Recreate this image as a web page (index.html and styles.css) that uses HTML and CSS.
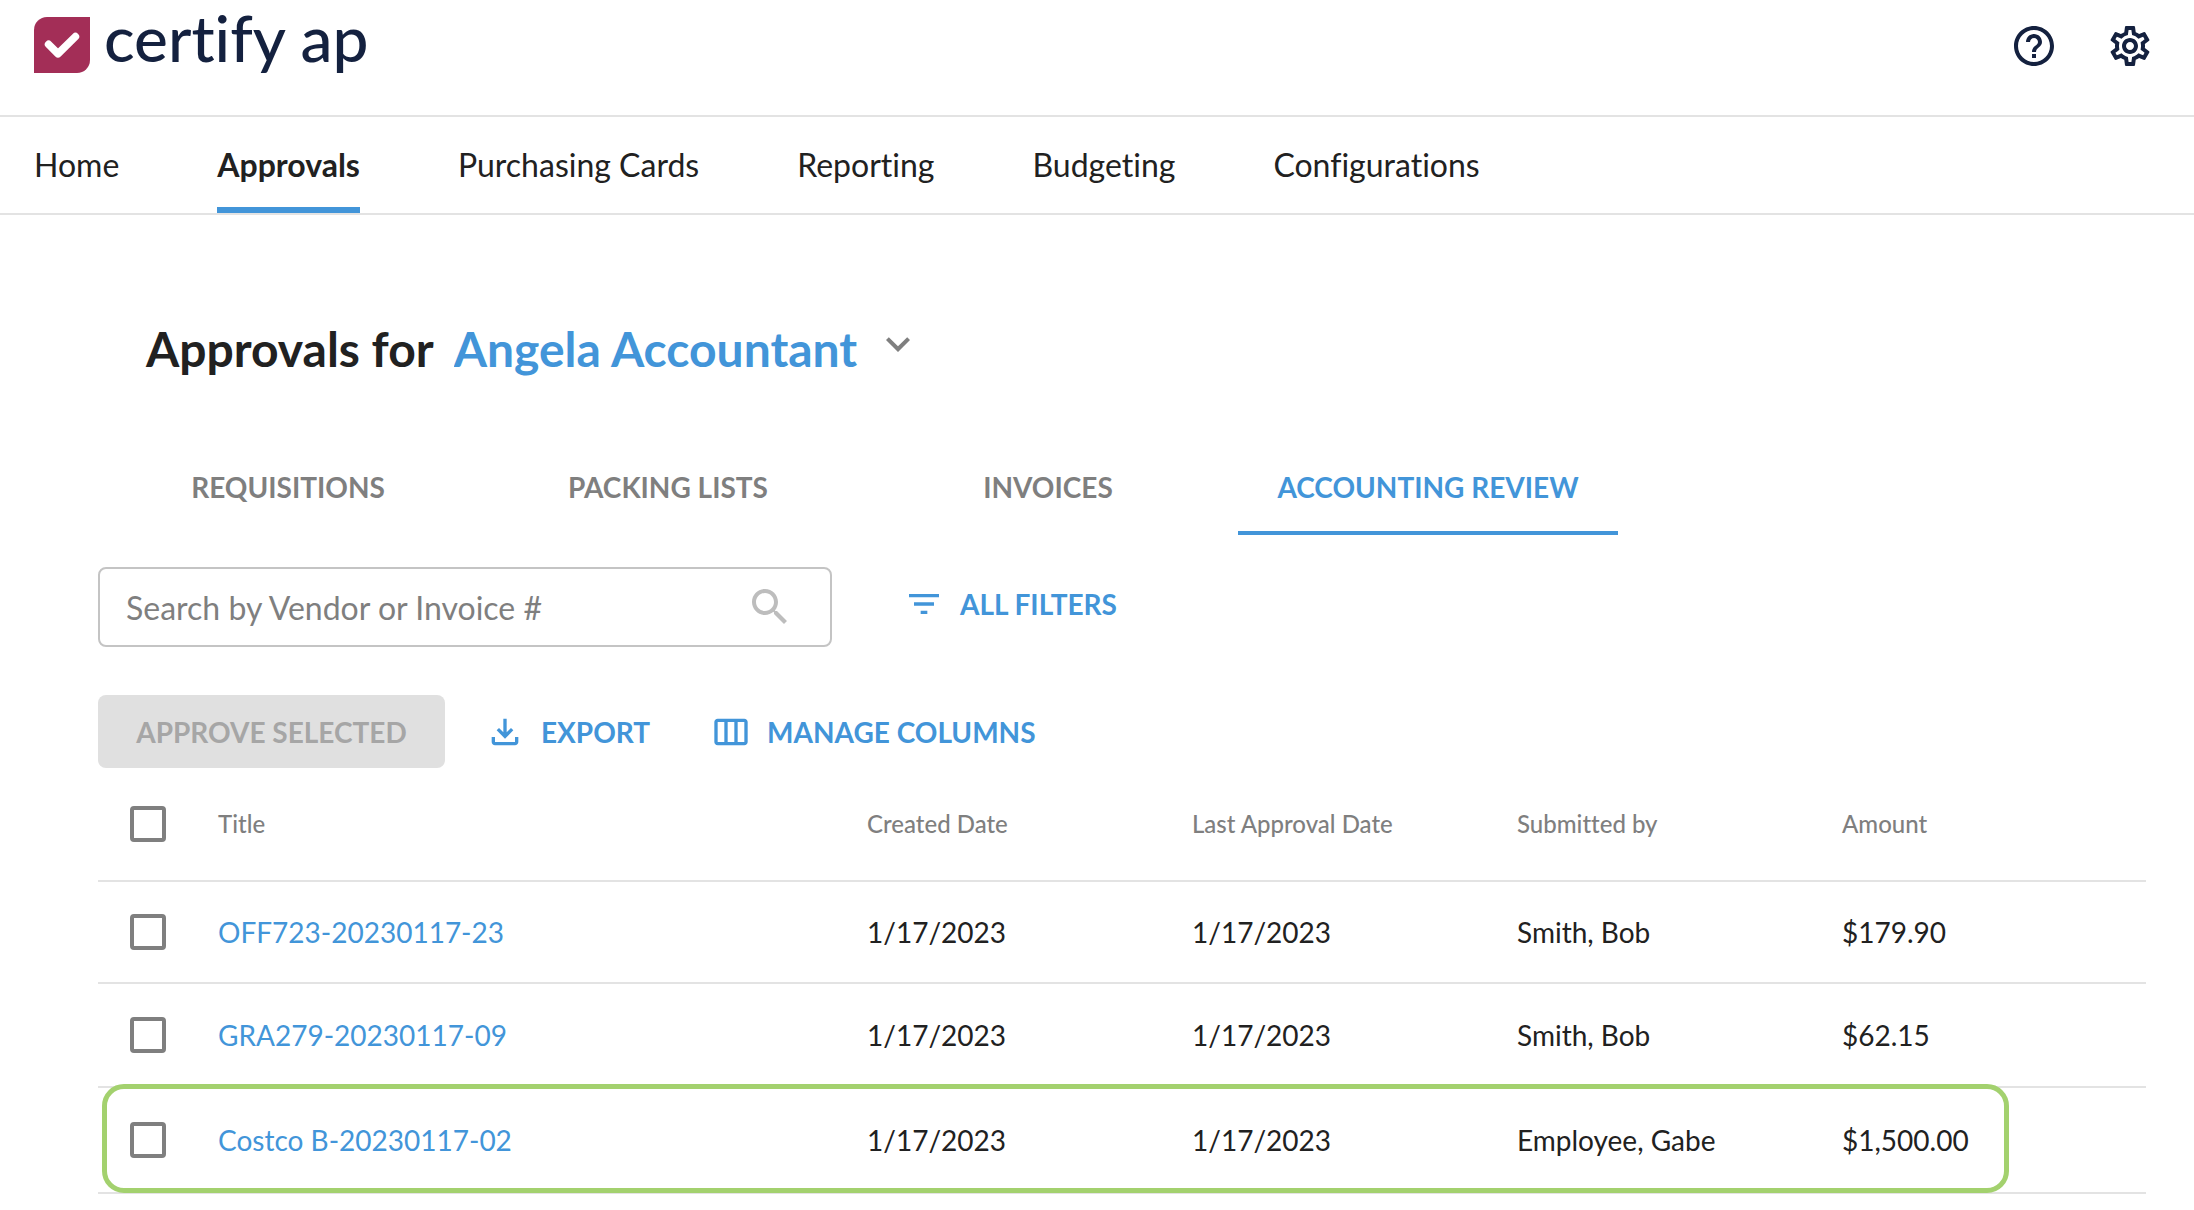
FILE: index.html
```html
<!DOCTYPE html>
<html lang="en">
<head>
<meta charset="utf-8">
<meta name="viewport" content="width=device-width, initial-scale=1">
<title>Approvals - certify ap</title>
<link rel="stylesheet" href="styles.css">
</head>
<body>
<header class="topbar">
  <a class="brand" href="#">
    <svg class="brand-mark" viewBox="0 0 56 56" aria-hidden="true">
      <path fill="#a32e57" d="M13 0H56V43A13 13 0 0 1 43 56H0V13A13 13 0 0 1 13 0Z"/>
      <path fill="none" stroke="#fff" stroke-width="7.6" stroke-linecap="round" stroke-linejoin="round" d="M14.6 27.4 24 36.8 41.4 19.6"/>
    </svg>
    <span class="brand-name">certify ap</span>
  </a>
  <div class="topbar-tools">
    <button class="icon-button" type="button" aria-label="Help">
      <svg class="icon-lg" viewBox="0 0 24 24" aria-hidden="true"><path d="M11 18h2v-2h-2v2zm1-16C6.48 2 2 6.48 2 12s4.480 10 10 10 10-4.480 10-10S17.520 2 12 2zm0 18c-4.410 0-8-3.590-8-8s3.590-8 8-8 8 3.590 8 8-3.590 8-8 8zm0-14c-2.210 0-4 1.790-4 4h2c0-1.100.9-2 2-2s2 .9 2 2c0 2-3 1.750-3 5h2c0-2.250 3-2.500 3-5 0-2.210-1.790-4-4-4z"/></svg>
    </button>
    <button class="icon-button" type="button" aria-label="Settings">
      <svg class="icon-lg" viewBox="0 0 24 24" aria-hidden="true"><path d="M19.430 12.980c.04-.32.07-.64.07-.98s-.03-.66-.07-.98l2.110-1.650c.19-.15.24-.42.12-.64l-2-3.460c-.09-.16-.26-.25-.44-.25-.06 0-.12.01-.17.03l-2.490 1c-.52-.4-1.080-.73-1.690-.98l-.38-2.650C14.460 2.180 14.250 2 14 2h-4c-.25 0-.46.18-.49.42l-.38 2.650c-.61.25-1.170.59-1.690.98l-2.490-1c-.06-.02-.12-.03-.18-.03-.17 0-.34.09-.43.25l-2 3.460c-.13.22-.07.49.12.64l2.110 1.650c-.04.32-.07.65-.07.98s.03.66.07.98l-2.110 1.650c-.19.15-.24.42-.12.64l2 3.460c.09.16.26.25.44.25.06 0 .12-.01.17-.03l2.490-1c.52.4 1.080.73 1.690.98l.38 2.650c.03.24.24.42.49.42h4c.25 0 .46-.18.49-.42l.38-2.650c.61-.25 1.170-.59 1.690-.98l2.490 1c.06.02.12.03.18.03.17 0 .34-.09.43-.25l2-3.460c.12-.22.07-.49-.12-.64l-2.110-1.650zm-1.980-1.710c.04.31.05.52.05.73 0 .21-.02.43-.05.73l-.14 1.130.89.7 1.080.84-.7 1.210-1.270-.51-1.040-.42-.9.68c-.43.32-.84.56-1.250.73l-1.060.43-.16 1.130-.2 1.350h-1.400l-.19-1.350-.16-1.130-1.060-.43c-.43-.18-.83-.41-1.230-.71l-.91-.7-1.060.43-1.270.51-.7-1.210 1.080-.84.89-.7-.14-1.130c-.03-.31-.05-.54-.05-.74s.02-.43.05-.73l.14-1.130-.89-.7-1.080-.84.7-1.210 1.270.51 1.040.42.9-.68c.43-.32.84-.56 1.250-.73l1.060-.43.16-1.130.2-1.350h1.390l.19 1.350.16 1.130 1.060.43c.43.18.83.41 1.230.71l.91.7 1.060-.43 1.270-.51.7 1.210-1.070.85-.89.7.14 1.130zM12 8c-2.210 0-4 1.790-4 4s1.790 4 4 4 4-1.790 4-4-1.790-4-4-4zm0 6c-1.100 0-2-.9-2-2s.9-2 2-2 2 .9 2 2-.9 2-2 2z"/></svg>
    </button>
  </div>
</header>

<nav class="mainnav" aria-label="Main">
  <a class="mainnav-link" href="#">Home</a>
  <a class="mainnav-link is-active" href="#" aria-current="page">Approvals</a>
  <a class="mainnav-link" href="#">Purchasing Cards</a>
  <a class="mainnav-link" href="#">Reporting</a>
  <a class="mainnav-link" href="#">Budgeting</a>
  <a class="mainnav-link" href="#">Configurations</a>
</nav>

<main class="page">
  <div class="heading">
    <h1 class="heading-title"><label for="approver">Approvals for</label></h1>
    <div class="approver">
      <select class="approver-select" id="approver">
        <option>Angela Accountant</option>
      </select>
      <svg class="approver-arrow" viewBox="0 0 24 24" aria-hidden="true"><path d="M16.590 8.590 12 13.170 7.410 8.590 6 10l6 6 6-6z"/></svg>
    </div>
  </div>

  <div class="tabs" role="tablist">
    <button class="tab" type="button" role="tab" aria-selected="false">REQUISITIONS</button>
    <button class="tab" type="button" role="tab" aria-selected="false">PACKING LISTS</button>
    <button class="tab" type="button" role="tab" aria-selected="false">INVOICES</button>
    <button class="tab is-active" type="button" role="tab" aria-selected="true">ACCOUNTING REVIEW</button>
  </div>

  <div class="filters">
    <div class="search">
      <input class="search-input" type="text" placeholder="Search by Vendor or Invoice #" aria-label="Search by Vendor or Invoice #">
      <svg class="icon-lg" viewBox="0 0 24 24" aria-hidden="true"><path d="M15.500 14h-.79l-.28-.27C15.410 12.590 16 11.110 16 9.500 16 5.910 13.090 3 9.500 3S3 5.910 3 9.500 5.910 16 9.500 16c1.610 0 3.090-.59 4.230-1.570l.27.28v.79l5 4.990L20.490 19l-4.990-5zm-6 0C7.010 14 5 11.990 5 9.500S7.010 5 9.500 5 14 7.010 14 9.500 11.990 14 9.500 14z"/></svg>
    </div>
    <button class="text-button" type="button">
      <svg class="icon" viewBox="0 0 24 24" aria-hidden="true"><path d="M10 18h4v-2h-4v2zM3 6v2h18V6H3zm3 7h12v-2H6v2z"/></svg>
      ALL FILTERS
    </button>
  </div>

  <div class="actions">
    <button class="approve-button" type="button" disabled>APPROVE SELECTED</button>
    <div class="actions-more">
      <button class="text-button" type="button">
        <svg class="icon" viewBox="0 0 24 24" aria-hidden="true"><path d="M18 15v3H6v-3H4v3c0 1.100.9 2 2 2h12c1.100 0 2-.9 2-2v-3h-2zm-1-4-1.410-1.410L13 12.170V4h-2v8.170L8.410 9.590 7 11l5 5 5-5z"/></svg>
        EXPORT
      </button>
      <button class="text-button" type="button">
        <svg class="icon" viewBox="0 0 24 24" aria-hidden="true"><path d="M20 4H4c-1.100 0-2 .9-2 2v12c0 1.100.9 2 2 2h16c1.100 0 2-.9 2-2V6c0-1.100-.9-2-2-2zM8 18H4V6h4v12zm6 0h-4V6h4v12zm6 0h-4V6h4v12z"/></svg>
        MANAGE COLUMNS
      </button>
    </div>
  </div>

  <table class="grid">
    <colgroup>
      <col class="col-check"><col><col class="col-data"><col class="col-data"><col class="col-data"><col class="col-amount">
    </colgroup>
    <thead>
      <tr>
        <th class="check-cell"><input class="check" type="checkbox" aria-label="Select all"></th>
        <th scope="col">Title</th>
        <th scope="col">Created Date</th>
        <th scope="col">Last Approval Date</th>
        <th scope="col">Submitted by</th>
        <th scope="col">Amount</th>
      </tr>
    </thead>
    <tbody>
      <tr class="row-first">
        <td class="check-cell"><input class="check" type="checkbox" aria-label="Select OFF723-20230117-23"></td>
        <td><a class="grid-link" href="#">OFF723-20230117-23</a></td>
        <td>1/17/2023</td>
        <td>1/17/2023</td>
        <td>Smith, Bob</td>
        <td>$179.90</td>
      </tr>
      <tr>
        <td class="check-cell"><input class="check" type="checkbox" aria-label="Select GRA279-20230117-09"></td>
        <td><a class="grid-link" href="#">GRA279-20230117-09</a></td>
        <td>1/17/2023</td>
        <td>1/17/2023</td>
        <td>Smith, Bob</td>
        <td>$62.15</td>
      </tr>
      <tr class="row-marked">
        <td class="check-cell"><input class="check" type="checkbox" aria-label="Select Costco B-20230117-02"></td>
        <td><a class="grid-link" href="#">Costco B-20230117-02</a></td>
        <td>1/17/2023</td>
        <td>1/17/2023</td>
        <td>Employee, Gabe</td>
        <td>$1,500.00</td>
      </tr>
    </tbody>
  </table>
</main>
</body>
</html>
```
FILE: styles.css
```css
:root {
  --blue: #4295d9;
  --navy: #14213f;
  --ink: #212121;
  --muted: #7f7f7f;
  --line: #e3e3e3;
}

* {
  box-sizing: border-box;
}

body {
  margin: 0;
  background: #fff;
  color: var(--ink);
  font-family: Lato, "Liberation Sans", sans-serif;
  font-size: 28px;
  font-variant-ligatures: none;
  line-height: 36px;
}

a {
  color: inherit;
  text-decoration: none;
}

button,
input,
select {
  margin: 0;
  padding: 0;
  border: 0;
  background: none;
  color: inherit;
  font: inherit;
}

svg {
  display: block;
  flex: none;
  fill: currentColor;
}

.icon {
  width: 40px;
  height: 40px;
}

.icon-lg {
  width: 48px;
  height: 48px;
}

/* Top bar */

.topbar {
  display: flex;
  justify-content: space-between;
  align-items: flex-start;
  height: 117px;
  padding: 17px 40px 0 34px;
  border-bottom: 2px solid var(--line);
}

.brand {
  display: flex;
  align-items: flex-start;
  gap: 14px;
  color: var(--navy);
}

.brand-mark {
  width: 56px;
  height: 56px;
}

.brand-name {
  font-size: 64px;
  font-weight: 500;
  line-height: 42px;
}

.topbar-tools {
  display: flex;
  gap: 48px;
  padding-top: 5px;
  color: var(--navy);
}

/* Main navigation */

.mainnav {
  display: flex;
  gap: 98px;
  padding: 0 34px;
  border-bottom: 2px solid var(--line);
  font-size: 32px;
}

.mainnav-link {
  height: 96px;
  padding-top: 30px;
  border-bottom: 6px solid transparent;
}

.mainnav-link.is-active {
  border-color: var(--blue);
  font-weight: 700;
}

/* Page heading */

.page {
  padding: 105px 48px 16px 98px;
}

.heading {
  display: flex;
  gap: 20px;
  padding-left: 48px;
  font-size: 48px;
  font-weight: 700;
  line-height: 58px;
}

.heading-title {
  margin: 0;
  font-size: 48px;
}

.approver {
  display: flex;
  position: relative;
}

.approver-select {
  height: 58px;
  padding-right: 62px;
  appearance: none;
  color: var(--blue);
}

.approver-arrow {
  position: absolute;
  top: 0;
  right: 0;
  width: 48px;
  height: 48px;
  color: var(--muted);
  pointer-events: none;
}

/* Tabs */

.tabs {
  display: flex;
  margin-top: 61px;
}

.tab {
  width: 380px;
  height: 96px;
  border-top: 4px solid transparent;
  border-bottom: 4px solid transparent;
  color: var(--muted);
  font-weight: 700;
}

.tab.is-active {
  border-bottom-color: var(--blue);
  color: var(--blue);
}

/* Search, filters and actions */

.filters {
  display: flex;
  align-items: flex-start;
  gap: 72px;
  margin-top: 32px;
}

.search {
  display: flex;
  align-items: center;
  width: 734px;
  height: 80px;
  padding: 0 36px 0 26px;
  border: 2px solid #c4c4c4;
  border-radius: 8px;
  color: #bdbdbd;
}

.search-input {
  flex: 1;
  height: 76px;
  color: var(--ink);
  font-size: 32px;
}

.search-input::placeholder {
  color: var(--muted);
  opacity: 1;
}

.text-button {
  display: flex;
  align-items: center;
  gap: 16px;
  height: 73px;
  color: var(--blue);
  font-weight: 700;
}

.actions {
  display: flex;
  gap: 40px;
  margin-top: 48px;
}

.actions-more {
  display: flex;
  gap: 61px;
}

.approve-button {
  min-width: 347px;
  height: 73px;
  padding: 0 32px;
  border-radius: 8px;
  background: #e0e0e0;
  color: #a6a6a6;
  font-weight: 700;
}

/* Approvals table */

.grid {
  width: 100%;
  table-layout: fixed;
  border-collapse: separate;
  border-spacing: 0;
}

.col-check {
  width: 120px;
}

.col-data {
  width: 325px;
}

.col-amount {
  width: 304px;
}

.grid th,
.grid td {
  height: 104px;
  padding: 0;
  border-bottom: 2px solid var(--line);
  text-align: left;
}

.grid th {
  height: 114px;
  color: var(--muted);
  font-size: 24px;
  font-weight: 500;
}

.grid .row-first td {
  height: 102px;
}

.grid .row-marked td {
  height: 106px;
}

.grid .check-cell {
  padding-left: 32px;
}

.check {
  display: block;
  width: 36px;
  height: 36px;
  border: 4px solid var(--muted);
  border-radius: 4px;
  appearance: none;
}

.check:checked {
  background: var(--blue);
}

.grid-link {
  color: var(--blue);
}

.row-marked {
  position: relative;
}

.row-marked td:last-child::after {
  content: "";
  position: absolute;
  inset: -4px 137px 1px 4px;
  border: 5px solid #a3d16e;
  border-radius: 22px;
  pointer-events: none;
}
```
